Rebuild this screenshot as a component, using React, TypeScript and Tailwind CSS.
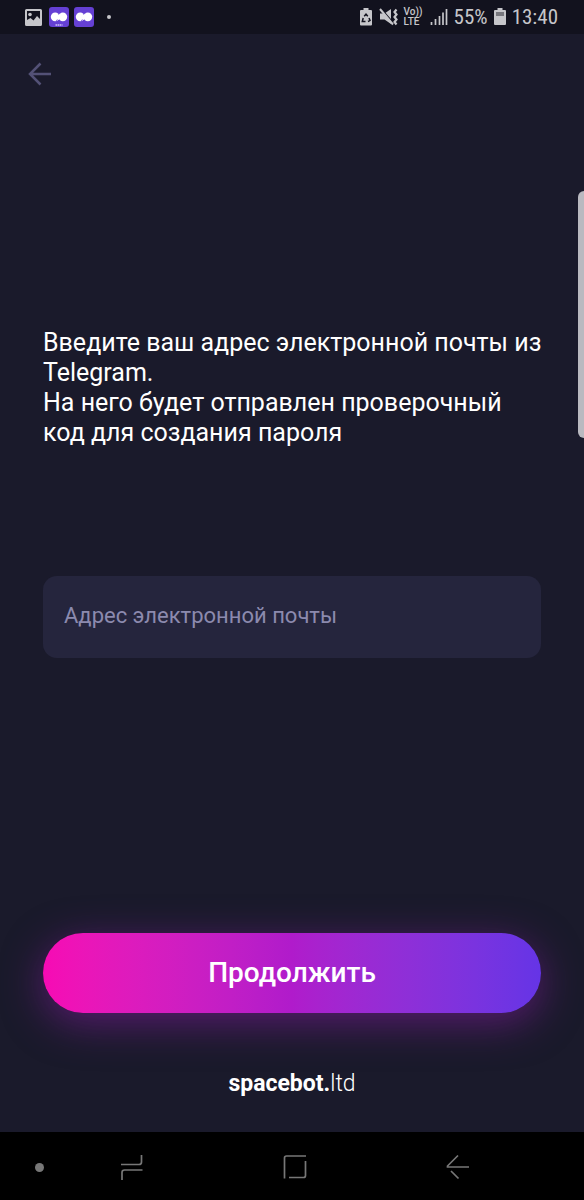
import { useState } from 'react';

function AppBadge({ caption }: { caption?: boolean }) {
  return (
    <svg width="20" height="20" viewBox="0 0 20 20" aria-hidden="true">
      <rect width="20" height="20" rx="3" fill="#6540d4" />
      <circle cx="6.2" cy="9.8" r="4.4" fill="#fff" />
      <circle cx="13.8" cy="9.8" r="4.4" fill="#fff" />
      <path d="M8 11.500 12 8" stroke="#fff" strokeWidth="4" />
      <path d="m9.600 7.600 2-2M8.400 12.400l-1.500 1.800" stroke="#6540d4" strokeWidth=".7" />
      {caption && <path d="M6.5 18h7" stroke="#cfc3f7" strokeWidth="1.4" strokeDasharray="1.6 .5" />}
    </svg>
  );
}

function StatusBar() {
  return (
    <div className="flex h-[34px] items-center justify-between bg-[#12121e] pr-[26px] pl-[25px] text-[#c6c6ca]">
      <div className="flex items-center">
        <svg width="17" height="17" viewBox="0 0 17 17" aria-hidden="true">
          <path fill="currentColor" fillRule="evenodd" d="M1.500 0h14A1.500 1.500 0 0 1 17 1.500v14a1.500 1.500 0 0 1-1.500 1.500h-14A1.500 1.500 0 0 1 0 15.500v-14A1.500 1.500 0 0 1 1.500 0ZM2 2v9l3.500-2 3 2.500L12 7l3 3V2Z" />
          <circle cx="5" cy="5.500" r="1.800" fill="currentColor" />
        </svg>
        <div className="ml-[7px] flex gap-[5px]">
          <AppBadge caption />
          <AppBadge />
        </div>
        <span className="ml-[13px] h-[4px] w-[4px] rounded-full bg-current" />
      </div>

      <div className="flex items-center font-['Roboto_Condensed','Roboto',sans-serif] text-[21px] leading-none">
        <svg width="12" height="18" viewBox="0 0 12 18" aria-hidden="true">
          <path d="M3.500 0h5v2H11a1 1 0 0 1 1 1v13.500a1 1 0 0 1-1 1H1a1 1 0 0 1-1-1V3a1 1 0 0 1 1-1h2.500Z" fill="currentColor" />
          <path d="m4.200 8.200 1.800-2 1.800 2M9 10l1 2.500-2 1M5.500 13.500H2.300L3.200 10" fill="none" stroke="#12121e" strokeWidth="1.500" />
        </svg>
        <svg className="ml-[7px]" width="20" height="18" viewBox="0 0 20 18" aria-hidden="true">
          <path d="M1 5.500h4.500L12 1v15l-6.500-4.500H1Z" fill="currentColor" />
          <path d="m2.500 1 12 14" stroke="#12121e" strokeWidth="1.200" />
          <path d="m1 1 13 15.500" stroke="currentColor" strokeWidth="2" />
          <path d="m17.500 1.500-2 2.500 2 2.500-2 2.500 2 2.500-2 2.500 2 2.500" fill="none" stroke="currentColor" strokeWidth="2.200" />
        </svg>
        <span className="ml-[5px] flex w-[18px] flex-col font-['Roboto',sans-serif] text-[10px] leading-[10px] font-medium">
          <span>Vo))</span>
          <span>LTE</span>
        </span>
        <svg className="ml-[8px]" width="18" height="18" viewBox="0 0 18 18" aria-hidden="true">
          <path d="M1.500 14v3M5.500 11v6M9.500 8v9M13 4.500V17M16.500 1v16" stroke="currentColor" strokeWidth="1.700" />
        </svg>
        <span className="ml-[6px]">55%</span>
        <svg className="ml-[6px]" width="12" height="18" viewBox="0 0 12 18" aria-hidden="true">
          <path d="M3.500 0h5v2H11a1 1 0 0 1 1 1v13a1 1 0 0 1-1 1H1a1 1 0 0 1-1-1V3a1 1 0 0 1 1-1h2.500Z" fill="currentColor" />
          <path d="M2 4h8v4H2Z" fill="#77777d" />
        </svg>
        <span className="ml-[6px]">13:40</span>
      </div>
    </div>
  );
}

function NavBar() {
  return (
    <nav className="flex h-[68px] items-center bg-black pt-[2px] pl-[35px] text-[#777]">
      <span className="h-[9px] w-[9px] rounded-full bg-current" />
      <div className="flex flex-1 items-center justify-between pr-[114px] pl-[76px]">
        <button type="button" aria-label="Недавние приложения">
          <svg width="24" height="28" viewBox="0 0 24 28" fill="none" stroke="currentColor" strokeWidth="1.700">
            <path d="M1 11.500h18q2.500 0 2.500-2.500V2M22.500 17H4.500Q2 17 2 19.500V27" />
          </svg>
        </button>
        <button type="button" aria-label="Главный экран">
          <svg width="24" height="26" viewBox="0 0 24 26" fill="none" stroke="currentColor" strokeWidth="1.700">
            <path d="M1.500 24.500V4Q1.500 2 3.500 2H23M22.500 7v14.500q0 2-2 2H6" />
          </svg>
        </button>
        <button type="button" aria-label="Назад">
          <svg width="24" height="26" viewBox="0 0 24 26" fill="none" stroke="currentColor" strokeWidth="1.700">
            <path d="M12 1.500 1.500 12v1H23M5 17l7.500 7.500" />
          </svg>
        </button>
      </div>
    </nav>
  );
}

export default function App() {
  const [email, setEmail] = useState('');

  return (
    <div className="relative flex min-h-screen flex-col overflow-hidden bg-[#1a1a2b] font-['Roboto',sans-serif] text-white">
      <StatusBar />

      <header className="flex h-[80px] items-center px-[28px]">
        <button type="button" aria-label="Вернуться" className="text-[#535176]">
          <svg width="24" height="24" viewBox="0 0 24 24" fill="none" stroke="currentColor" strokeWidth="2.500">
            <path d="M23 12H2M12.500 1.500 2 12l10.500 10.500" />
          </svg>
        </button>
      </header>

      <form className="flex flex-1 flex-col px-[43px] pt-[214px]" onSubmit={(e) => e.preventDefault()}>
        <p className="-mr-2 text-[25px] leading-[30px]">
          Введите ваш адрес электронной почты из Telegram.
          <br />
          На него будет отправлен проверочный код для создания пароля
        </p>
        <input
          type="email"
          aria-label="Адрес электронной почты"
          placeholder="Адрес электронной почты"
          value={email}
          onChange={(e) => setEmail(e.target.value)}
          className="mt-[128px] h-[82px] w-full rounded-[14px] bg-[#25253d] px-[21px] pb-[3px] text-[22px] outline-none placeholder:text-[#8c8aae]"
        />
        <button
          type="submit"
          className="mt-auto h-[80px] w-full rounded-full bg-linear-to-r from-[#f70ab4] via-[#b01bcb] to-[#6534e6] text-[28px] font-medium shadow-[0_10px_40px_rgba(150,28,180,0.5)]"
        >
          Продолжить
        </button>
      </form>

      <footer className="flex h-[119px] items-center justify-center pt-[24px] text-[23px]">
        <p>
          <span className="font-bold">spacebot.</span>
          <span className="font-light">ltd</span>
        </p>
      </footer>

      <NavBar />

      {/* Edge panel handle */}
      <span className="absolute top-[191px] right-0 h-[247px] w-[6px] rounded-l-[6px] bg-[#b9b9c0]" />
    </div>
  );
}
